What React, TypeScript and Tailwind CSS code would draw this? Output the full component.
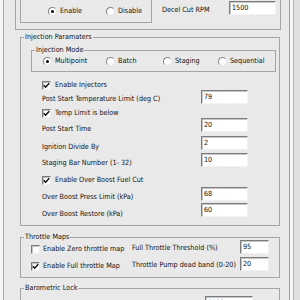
import React from "react";

function Radio({ on }: { on?: boolean }) {
  return (
    <span className="w-[9px] h-[9px] rounded-full bg-white border border-[#858585] border-b-[#e2e2e2] border-r-[#e2e2e2] flex items-center justify-center shrink-0">
      {on && <span className="w-[3px] h-[3px] rounded-full bg-black" />}
    </span>
  );
}

function Check({ on }: { on?: boolean }) {
  return (
    <span className="w-[9px] h-[9px] bg-white border border-[#7a7a7a] border-b-[#eeeeee] border-r-[#eeeeee] shadow-[inset_1px_1px_0_#c2c2c2] flex items-center justify-center shrink-0">
      {on && (
        <svg width="7" height="7" viewBox="0 0 7 7">
          <path d="M0.8 3.2 L2.6 5.2 L6.3 1.2" stroke="#111" strokeWidth="1.5" fill="none" />
        </svg>
      )}
    </span>
  );
}

function Field({ value, wide }: { value: string; wide?: boolean }) {
  return (
    <div
      className={`${wide ? "w-[48px]" : "w-[47px]"} h-[14px] shrink-0 bg-white border border-[#7c7c7c] border-b-[#f2f2f2] border-r-[#f2f2f2] shadow-[inset_1px_1px_0_#c6c6c6] pl-[2px] leading-[12px]`}
    >
      {value}
    </div>
  );
}

function SmallField({ value }: { value: string }) {
  return (
    <div className="w-[29px] h-[14px] shrink-0 bg-white border border-[#7c7c7c] border-b-[#f2f2f2] border-r-[#f2f2f2] shadow-[inset_1px_1px_0_#c6c6c6] pl-[2px] leading-[12px]">
      {value}
    </div>
  );
}

function CheckLabel({ on, text }: { on?: boolean; text: string }) {
  return (
    <div className="flex items-center h-[10px] gap-[4px]">
      <Check on={on} />
      <span>{text}</span>
    </div>
  );
}

export default function App() {
  return (
    <div className="w-[300px] h-[300px] overflow-hidden bg-[#e9e9e9] flex font-['DejaVu_Sans_Condensed','Liberation_Sans',Arial,sans-serif] text-[7.2px] leading-[10px] text-[#111] whitespace-nowrap">
      {/* left window edge */}
      <div className="w-[4px] h-full bg-[#f5f5f5] border-r border-[#a9a9a9] shrink-0" />

      <div className="w-[285px] flex flex-col shrink-0">
        {/* Options (top, scrolled) */}
        <div className="ml-[11px] w-[266px] h-[30px] border-l border-r border-b border-[#a5a5a5] flex items-start shrink-0">
          <div className="ml-[4px] w-[132px] h-[23px] border-l border-r border-b border-[#a5a5a5] flex flex-col">
            <span className="-mt-[7px] ml-[9px] leading-[10px]">Enable Disable</span>
            <div className="mt-[3px] h-[10px] pl-[27px] flex items-center">
              <div className="w-[58px] flex items-center gap-[3px]">
                <Radio on />
                <span>Enable</span>
              </div>
              <div className="flex items-center gap-[3px]">
                <Radio />
                <span>Disable</span>
              </div>
            </div>
          </div>
          <span className="ml-[10px] mt-[5px] w-[67px]">Decel Cut RPM</span>
          <div className="mt-[1px]">
            <Field value="1500" />
          </div>
        </div>

        {/* Injection Paramaters */}
        <fieldset className="mt-[2px] ml-[16px] w-[260px] border border-[#a5a5a5] min-w-0 shrink-0">
          <legend className="ml-[3px] px-[1px] leading-[10px]">Injection Paramaters</legend>

          <fieldset className="mt-[3px] ml-[10px] w-[245px] border border-[#a5a5a5] pb-[4px]">
            <legend className="ml-[3px] px-[1px] leading-[10px]">Injection Mode</legend>
            <div className="h-[12px] pl-[11px] flex items-center">
              <div className="w-[63px] flex items-center gap-[3px]">
                <Radio on />
                <span>Multipoint</span>
              </div>
              <div className="w-[57px] flex items-center gap-[3px]">
                <Radio />
                <span>Batch</span>
              </div>
              <div className="w-[55px] flex items-center gap-[3px]">
                <Radio />
                <span>Staging</span>
              </div>
              <div className="flex items-center gap-[3px]">
                <Radio />
                <span>Sequential</span>
              </div>
            </div>
          </fieldset>

          <div className="ml-[21px] flex flex-col">
            <div className="h-[18px] pt-[8px]">
              <CheckLabel on text="Enable Injectors" />
            </div>
            <div className="h-[16px] flex items-start">
              <span className="w-[159px] mt-[4px]">Post Start Temperature Limit (deg C)</span>
              <Field value="79" />
            </div>
            <div className="h-[12px] pt-[2px]">
              <CheckLabel on text="Temp Limit is below" />
            </div>
            <div className="h-[18px] flex items-start">
              <span className="w-[159px] mt-[6px]">Post Start Time</span>
              <Field value="20" />
            </div>
            <div className="h-[17px] flex items-start">
              <span className="w-[159px] mt-[6px]">Ignition Divide By</span>
              <Field value="2" />
            </div>
            <div className="h-[17px] flex items-start">
              <span className="w-[159px] mt-[5px]">Staging Bar Number (1- 32)</span>
              <Field value="10" />
            </div>
            <div className="h-[17px] pt-[5px]">
              <CheckLabel on text="Enable Over Boost Fuel Cut" />
            </div>
            <div className="h-[16px] flex items-start">
              <span className="w-[159px] mt-[5px]">Over Boost Press Limit (kPa)</span>
              <Field value="68" />
            </div>
            <div className="h-[22px] flex items-start">
              <span className="w-[159px] mt-[6px]">Over Boost Restore (kPa)</span>
              <Field value="60" />
            </div>
          </div>
        </fieldset>

        {/* Throttle Maps */}
        <fieldset className="mt-[6px] ml-[16px] w-[260px] border border-[#a5a5a5] min-w-0 shrink-0">
          <legend className="ml-[3px] px-[1px] leading-[10px]">Throttle Maps</legend>
          <div className="ml-[10px] flex flex-col">
            <div className="h-[15px] flex items-start">
              <div className="w-[101px] mt-[2px] flex items-center h-[10px] gap-[3px]">
                <Check />
                <span>Enable Zero throttle map</span>
              </div>
              <span className="w-[108px] mt-[1px]">Full Throttle Threshold (%)</span>
              <div className="-mt-[2px]">
                <SmallField value="95" />
              </div>
            </div>
            <div className="h-[20px] flex items-start">
              <div className="w-[101px] mt-[4px] flex items-center h-[10px] gap-[3px]">
                <Check on />
                <span>Enable Full throttle Map</span>
              </div>
              <span className="w-[108px] mt-[3px]">Throttle Pump dead band (0-20)</span>
              <SmallField value="20" />
            </div>
          </div>
        </fieldset>

        {/* Barometric Lock */}
        <fieldset className="mt-[5px] ml-[16px] w-[260px] h-[40px] border border-[#a5a5a5] min-w-0 shrink-0">
          <legend className="ml-[3px] px-[1px] leading-[10px]">Barometric Lock</legend>
          <div className="ml-[184px] mt-[3px]">
            <Field value="1013" wide />
          </div>
        </fieldset>
      </div>

      {/* right window edge */}
      <div className="w-[11px] h-full flex shrink-0">
        <div className="w-[4px] h-full bg-[#f7f7f7] border-l border-[#9e9e9e]" />
        <div className="w-[1px] h-full bg-[#b3b3b3]" />
        <div className="flex-1 h-full bg-[#e0e0e0]" />
      </div>
    </div>
  );
}
